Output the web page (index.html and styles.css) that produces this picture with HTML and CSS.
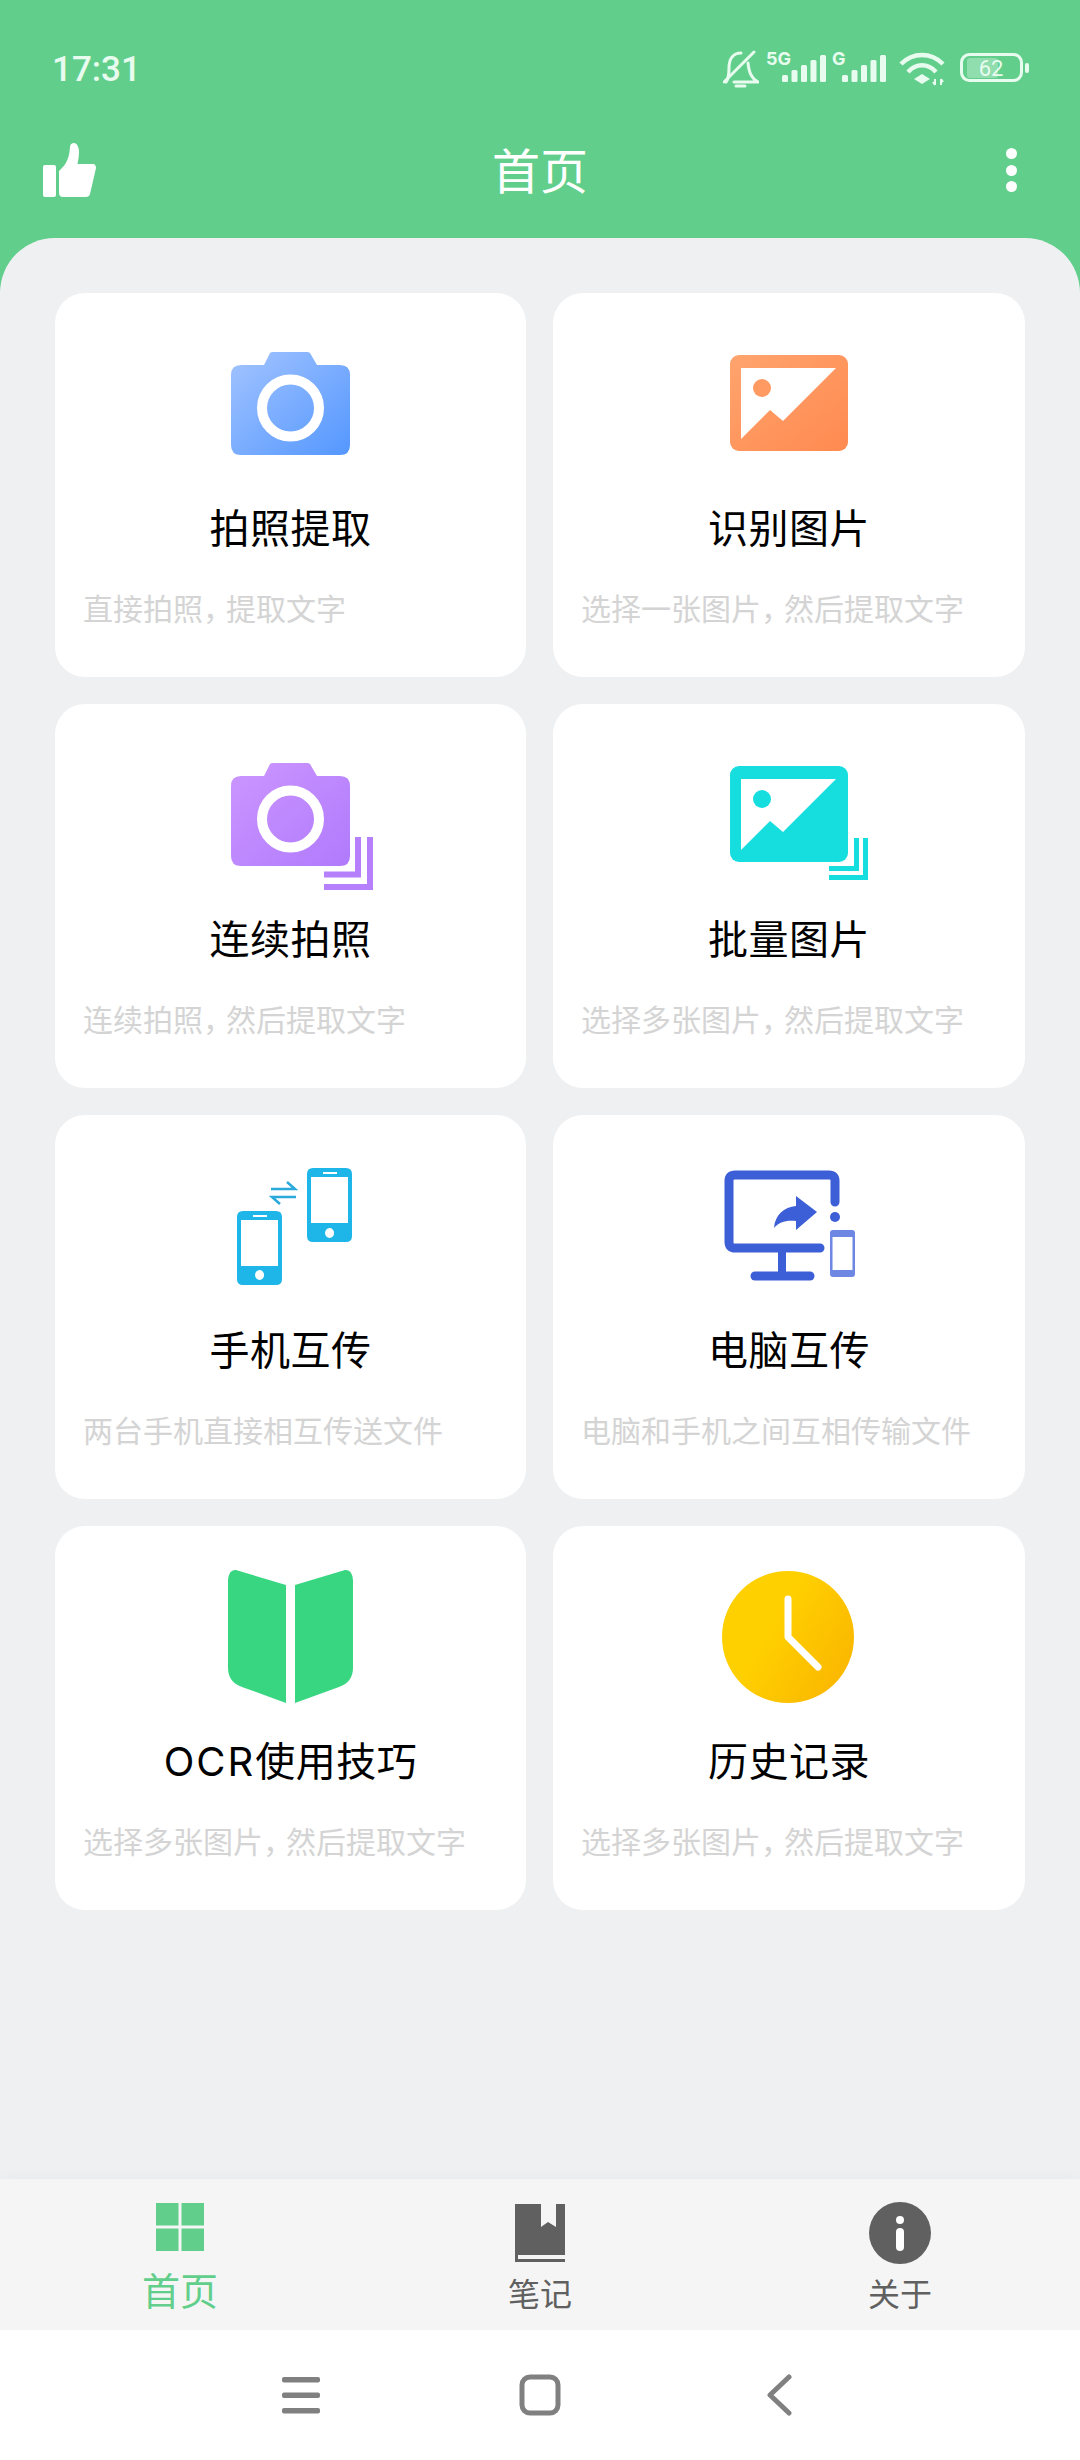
FILE: index.html
```html
<!DOCTYPE html>
<html lang="zh-CN">
<head>
    <meta charset="UTF-8">
    <meta name="viewport" content="width=device-width, user-scalable=no"/>
    <title>首页</title>
    <link rel="stylesheet" href="styles.css">
</head>
<body>
<section class="app">
    <header class="head">
        <div class="status">
            <span class="time">17:31</span>
            <div class="status-icons">
                <svg class="ic-bell" width="36" height="38" viewBox="0 0 36 38" fill="none" stroke="#e8fbef" stroke-width="3" stroke-linecap="round" stroke-linejoin="round">
                    <path d="M1 32 31 2"/>
                    <path d="M3 32C6 28 6 24 6 18 6 9 10 3 18 3"/>
                    <path d="M25 13C26 22 28 28 35 32H11"/>
                    <path d="M13 36H22"/>
                </svg>
                <svg width="60" height="44" viewBox="0 -5 60 44" fill="#e8fbef">
                    <text class="net" x="0" y="13">5G</text>
                    <rect x="16" y="23" width="6" height="7" rx="1.5"/>
                    <rect x="25.5" y="18" width="6" height="12" rx="1.5"/>
                    <rect x="35" y="13" width="6" height="17" rx="1.5"/>
                    <rect x="44.5" y="8" width="6" height="22" rx="1.5"/>
                    <rect x="54" y="3" width="6" height="27" rx="1.5"/>
                </svg>
                <svg width="54" height="44" viewBox="0 -5 54 44" fill="#e8fbef">
                    <text class="net" x="0" y="13">G</text>
                    <rect x="10" y="23" width="6" height="7" rx="1.5"/>
                    <rect x="19.5" y="18" width="6" height="12" rx="1.5"/>
                    <rect x="29" y="13" width="6" height="17" rx="1.5"/>
                    <rect x="38.5" y="8" width="6" height="22" rx="1.5"/>
                    <rect x="48" y="3" width="6" height="27" rx="1.5"/>
                </svg>
                <svg class="ic-wifi" width="46" height="34" viewBox="0 0 46 34" fill="none" stroke="#e8fbef" stroke-width="4.5">
                    <path d="M2 12C14 0 32 0 44 12"/>
                    <path d="M9 20C17 11 29 11 37 20"/>
                    <path d="M15 27 23 22 31 27 23 32Z" fill="#e8fbef" stroke="none"/>
                    <path d="M36 27V33M34 30 36 33M42 33V27M42 27 44 30" stroke-width="2"/>
                </svg>
                <svg class="ic-batt" width="70" height="34" viewBox="0 0 70 34" fill="none">
                    <rect x="1.5" y="2.5" width="60" height="26" rx="8" stroke="#e8fbef" stroke-width="3"/>
                    <rect x="7" y="6" width="31" height="20" rx="3" fill="#fff" fill-opacity=".3"/>
                    <rect x="65" y="11" width="4" height="10" rx="2" fill="#e8fbef"/>
                    <text class="batt-num" x="31" y="24" text-anchor="middle">62</text>
                </svg>
            </div>
        </div>
        <div class="toolbar">
            <svg class="ic-thumb" width="53" height="55" viewBox="0 0 53 55" fill="#fff">
                <rect x="0" y="22" width="13" height="32" rx="2"/>
                <path d="M16 28C21 23 26 19 27 4 27 1 29 0 31 0 34 0 36 4 36 9 36 14 35 18 34.5 21H50C52 21 53 23 53 25L47 51C46.5 53 45 54 43 54H20C17 54 16 52 16 50Z"/>
            </svg>
            <h1 class="title">首页</h1>
            <div class="more"><i></i><i></i><i></i></div>
        </div>
    </header>

    <main class="main">
        <ul class="cards">
            <li class="card">
                <svg class="card-ic" viewBox="0 -15 200 150">
                    <defs><linearGradient id="gBlue" x1="0" y1="0" x2="1" y2="1"><stop offset="0" stop-color="#a3c4ff"/><stop offset="1" stop-color="#5497ff"/></linearGradient></defs>
                    <path fill="url(#gBlue)" d="M51 22H74L80 10Q81 9 83 9H117Q119 9 120 10L127 22H150Q160 22 160 32V102Q160 112 150 112H51Q41 112 41 102V32Q41 22 51 22Z"/>
                    <circle cx="100.5" cy="65" r="28.5" fill="none" stroke="#fff" stroke-width="10"/>
                </svg>
                <h2 class="card-title">拍照提取</h2>
                <p class="card-sub">直接拍照<span class="comma">，</span>提取文字</p>
            </li>
            <li class="card">
                <svg class="card-ic" viewBox="0 -15 200 150">
                    <defs><linearGradient id="gOrange" x1="0" y1="0" x2="1" y2="1"><stop offset="0" stop-color="#ffa46e"/><stop offset="1" stop-color="#ff8a50"/></linearGradient></defs>
                    <rect x="41" y="12" width="118" height="96" rx="9" fill="url(#gOrange)"/>
                    <path fill="#fff" d="M52 25H147L94 78 81 67 52 96Z"/>
                    <circle cx="73" cy="45" r="9" fill="#ff9a62"/>
                </svg>
                <h2 class="card-title">识别图片</h2>
                <p class="card-sub">选择一张图片<span class="comma">，</span>然后提取文字</p>
            </li>
            <li class="card">
                <svg class="card-ic" viewBox="0 -15 200 150">
                    <defs><linearGradient id="gPurple" x1="0" y1="0" x2="1" y2="1"><stop offset="0" stop-color="#cc96ff"/><stop offset="1" stop-color="#b07afd"/></linearGradient></defs>
                    <path fill="url(#gPurple)" d="M51 22H74L80 10Q81 9 83 9H117Q119 9 120 10L127 22H150Q160 22 160 32V102Q160 112 150 112H51Q41 112 41 102V32Q41 22 51 22Z"/>
                    <circle cx="100.5" cy="65" r="28.5" fill="none" stroke="#fff" stroke-width="10"/>
                    <path fill="none" stroke="#b680fd" stroke-width="6" d="M168 83V120.500H134M180 83V133H134"/>
                </svg>
                <h2 class="card-title">连续拍照</h2>
                <p class="card-sub">连续拍照<span class="comma">，</span>然后提取文字</p>
            </li>
            <li class="card">
                <svg class="card-ic" viewBox="0 -15 200 150">
                    <rect x="41" y="12" width="118" height="96" rx="9" fill="#17dede"/>
                    <path fill="#fff" d="M52 25H147L94 78 81 67 52 96Z"/>
                    <circle cx="73" cy="45" r="9" fill="#17dede"/>
                    <path fill="none" stroke="#17dede" stroke-width="5" d="M167.500 84V114.500H140M176.500 84V123.500H140"/>
                </svg>
                <h2 class="card-title">批量图片</h2>
                <p class="card-sub">选择多张图片<span class="comma">，</span>然后提取文字</p>
            </li>
            <li class="card">
                <svg class="card-ic" viewBox="0 -15 200 150">
                    <g fill="#1eb6e9">
                        <path fill-rule="evenodd" d="M123 3H156Q162 3 162 9V71Q162 77 156 77H123Q117 77 117 71V9Q117 3 123 3ZM121 12V58H158V12ZM133 7V9H147V7ZM139.500 63A4.500 5 0 1 0 139.600 73 4.500 5 0 1 0 139.500 63Z"/>
                        <path fill-rule="evenodd" d="M53 46H86Q92 46 92 52V114Q92 120 86 120H53Q47 120 47 114V52Q47 46 53 46ZM51 55V101H88V55ZM63 50V52H77V50ZM69.500 105A4.500 5 0 1 0 69.600 115 4.500 5 0 1 0 69.500 105Z"/>
                    </g>
                    <path fill="none" stroke="#2ba9db" stroke-width="2.500" d="M81 24H105L97 17M106 32H82L90 39"/>
                </svg>
                <h2 class="card-title">手机互传</h2>
                <p class="card-sub">两台手机直接相互传送文件</p>
            </li>
            <li class="card">
                <svg class="card-ic" viewBox="0 -15 200 150">
                    <g fill="none" stroke="#3c5fd8" stroke-linecap="round">
                        <path stroke-width="9" d="M146 37V16Q146 10 140 10H46Q40 10 40 16V77Q40 83 46 83H131"/>
                        <path stroke-width="8" d="M93 85V111"/>
                        <path stroke-width="9" d="M66 111H121"/>
                    </g>
                    <g fill="#3c5fd8">
                        <circle cx="146" cy="52" r="5"/>
                        <path d="M107 31 128 47 107 65V56C97 55 90 57 85 63 86 50 95 42 107 41Z"/>
                        <path d="M144 65H163Q166 65 166 68V109Q166 112 163 112H144Q141 112 141 109V68Q141 65 144 65ZM143.500 72V105H163.500V72Z" fill-rule="evenodd" fill-opacity=".75"/>
                    </g>
                </svg>
                <h2 class="card-title">电脑互传</h2>
                <p class="card-sub">电脑和手机之间互相传输文件</p>
            </li>
            <li class="card">
                <svg class="card-ic" viewBox="0 -15 200 150">
                    <g fill="#38d680">
                        <path d="M46 -6 96 9V127L52 111Q38 106 38 92V4Q39 -7 46 -6Z"/>
                        <path d="M155 -6 105 9V127L149 111Q163 106 163 92V4Q162 -7 155 -6Z"/>
                    </g>
                </svg>
                <h2 class="card-title"><span class="latin">OCR</span>使用技巧</h2>
                <p class="card-sub">选择多张图片<span class="comma">，</span>然后提取文字</p>
            </li>
            <li class="card">
                <svg class="card-ic" viewBox="0 -15 200 150">
                    <defs><linearGradient id="gGold" x1="0" y1="0" x2="1" y2=".6"><stop offset=".45" stop-color="#ffd000"/><stop offset="1" stop-color="#fbb900"/></linearGradient></defs>
                    <circle cx="99" cy="61" r="66" fill="url(#gGold)"/>
                    <path fill="none" stroke="#fff" stroke-width="7" stroke-linecap="round" stroke-linejoin="round" d="M99 23V61L129 91"/>
                </svg>
                <h2 class="card-title">历史记录</h2>
                <p class="card-sub">选择多张图片<span class="comma">，</span>然后提取文字</p>
            </li>
        </ul>
    </main>

    <nav class="tabs">
        <a class="tab active">
            <svg class="tab-ic" viewBox="0 0 62 62" fill="#61cf8b">
                <rect x="7" y="1" width="22.500" height="22.500"/>
                <rect x="32.500" y="1" width="22.500" height="22.500"/>
                <rect x="7" y="26.500" width="22.500" height="22.500"/>
                <rect x="32.500" y="26.500" width="22.500" height="22.500"/>
            </svg>
            <span class="tab-label">首页</span>
        </a>
        <a class="tab">
            <svg class="tab-ic" viewBox="0 0 62 62" fill="#606060">
                <path d="M6 2H32V25L39 20 47 25V2H56V53H9V57H56V60H6Z"/>
            </svg>
            <span class="tab-label">笔记</span>
        </a>
        <a class="tab">
            <svg class="tab-ic" viewBox="0 0 62 62">
                <circle cx="31" cy="31" r="31" fill="#606060"/>
                <circle cx="31" cy="18" r="4" fill="#fff"/>
                <rect x="27" y="26" width="8" height="23" rx="4" fill="#fff"/>
            </svg>
            <span class="tab-label">关于</span>
        </a>
    </nav>

    <footer class="sysnav">
        <svg width="40" height="40" viewBox="0 0 40 40" fill="#808080">
            <rect x="1" y="2" width="38" height="5.500" rx="2"/>
            <rect x="1" y="17.500" width="38" height="5.500" rx="2"/>
            <rect x="1" y="33" width="38" height="5.500" rx="2"/>
        </svg>
        <svg width="42" height="42" viewBox="0 0 42 42" fill="none" stroke="#808080" stroke-width="5">
            <rect x="3" y="3" width="36" height="36" rx="8"/>
        </svg>
        <svg width="26" height="42" viewBox="0 0 26 42" fill="none" stroke="#808080" stroke-width="5" stroke-linecap="round" stroke-linejoin="round">
            <path d="M23 3 4 21 23 39"/>
        </svg>
    </footer>
</section>
</body>
</html>
```

FILE: styles.css
```css
html, body{ margin: 0; padding: 0;}
body{ font-family: "Noto Sans CJK SC", "Noto Sans", sans-serif;}
h1, h2, p{ margin: 0; font-weight: normal;}
ul{ margin: 0; padding: 0; list-style: none;}
svg{ display: block;}

.app{ width: 1080px; height: 2460px; display: flex; flex-direction: column; background: #61cf8b; overflow: hidden;}

/* status + toolbar */
.head{ height: 238px; flex: none;}
.status{ height: 102px; padding: 18px 50px 0 52px; display: flex; justify-content: space-between; align-items: center;}
.time{ font: 500 35px Roboto, sans-serif; color: #e8fbef;}
.status-icons{ display: flex; align-items: center; gap: 6px;}
.ic-bell{ margin-right: 1px;}
.ic-wifi{ margin-left: 7px;}
.ic-batt{ margin-left: 9px;}
.net{ font: 700 18px Inter, sans-serif;}
.batt-num{ font: 400 22px Roboto, sans-serif; fill: #e8fbef;}

.toolbar{ height: 100px; padding: 0 43px; display: grid; grid-template-columns: 1fr auto 1fr; align-items: center;}
.title{ margin-bottom: 4px; font-size: 48px; line-height: 60px; color: #fff;}
.more{ justify-self: end; margin-right: 20px; display: flex; flex-direction: column; gap: 5.500px;}
.more i{ display: block; width: 11px; height: 11px; border-radius: 50%; background: #fff;}

/* grid of cards */
.main{ flex: 1; background: #eff0f2; border-radius: 55px 55px 0 0; padding: 55px;}
.cards{ display: grid; grid-template-columns: 471px 472px; grid-auto-rows: 384px; gap: 27px;}
.card{ background: #fff; border-radius: 30px; padding-top: 35px; box-sizing: border-box; display: flex; flex-direction: column; align-items: center;}
.card-ic{ width: 200px; height: 150px; flex: none; overflow: visible;}
.card:nth-child(odd) .card-ic{ margin-left: -2px;}
.card-title{ margin-top: 20px; font-size: 40px; line-height: 56px; color: #000; letter-spacing: .5px;}
.latin{ font-family: Inter, sans-serif; line-height: 1; letter-spacing: 2px;}
.card-sub{ margin-top: 33px; align-self: flex-start; padding-left: 28px; font-size: 30px; line-height: 40px; color: #d4d4d4;}
.comma{ letter-spacing: -7px;}

/* bottom tabs */
.tabs{ height: 151px; flex: none; box-sizing: border-box; padding-top: 23px; background: #f5f5f5; box-shadow: 0 -5px 10px rgba(0,0,0,.02); display: grid; grid-template-columns: repeat(3, 1fr);}
.tab{ display: flex; flex-direction: column; align-items: center; color: #606060;}
.tab-ic{ width: 62px; height: 62px; flex: none;}
.tab-label{ margin-top: 8px; font-size: 32px; line-height: 40px;}
.tab.active{ color: #61cf8b;}
.tab.active .tab-label{ margin-top: 7px; font-size: 38px; line-height: 36px;}

.sysnav{ height: 130px; flex: none; background: #fff; display: flex; align-items: center; justify-content: center; padding-right: 7px;}
.sysnav svg:nth-child(1){ margin-right: 198px;}
.sysnav svg:nth-child(2){ margin-right: 205px;}
```
